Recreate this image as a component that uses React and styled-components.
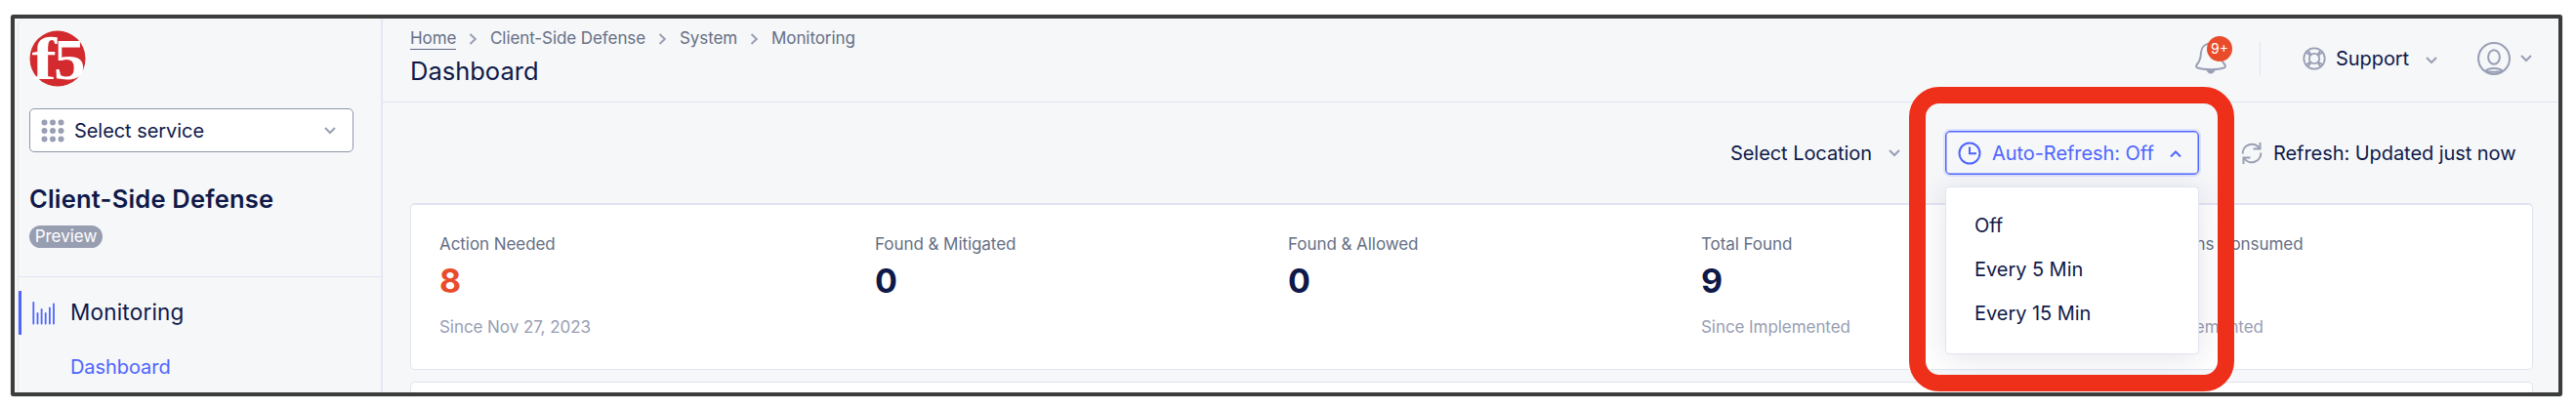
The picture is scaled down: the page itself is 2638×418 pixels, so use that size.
import React from "react";
import styled, { createGlobalStyle } from "styled-components";

const c = {
  ink: "#0f1949",
  muted: "#666f85",
  faint: "#989eb3",
  icon: "#999fb4",
  line: "#e1e4f1",
  bg: "#f5f7f9",
  blue: "#4f65ff",
  alert: "#e94c2a",
};

const GlobalStyle = createGlobalStyle`
  * { box-sizing: border-box; }
  body { margin: 0; background: #fff; font-family: Inter, "Liberation Sans", sans-serif; color: ${c.ink}; }
`;

const Page = styled.div`
  position: relative;
  width: 2638px;
  height: 418px;
  padding: 15px 0 0 11px;
  overflow: hidden;
`;
const Frame = styled.div`
  display: flex;
  width: 2613px;
  height: 391px;
  padding-left: 3px;
  border: 4px solid #3b3c3c;
  border-radius: 3px;
  background: ${c.bg};
  overflow: hidden;
  box-shadow: 0 0 1px #777;
`;
const Sidebar = styled.aside`
  flex: none;
  width: 374px;
  height: 383px;
  border-left: 1px solid #e9e7e7;
  border-right: 2px solid #e6e8f3;
  border-top-left-radius: 8px;
  display: flex;
  flex-direction: column;
`;
const SidebarTop = styled.div`
  flex: none;
  height: 265px;
  padding: 12px 27px 0 11px;
  border-bottom: 1px solid ${c.line};
`;
const Logo = styled.svg`
  display: block;
  width: 58px;
  height: 58px;
  overflow: visible;
`;
const ServiceSelect = styled.div`
  display: flex;
  align-items: center;
  width: 332px;
  height: 45px;
  margin-top: 22px;
  padding: 0 16px 0 11px;
  border: 1px solid #8f96ab;
  border-radius: 5px;
  background: #fff;
`;
const Text = styled.span`
  display: block;
  font-size: ${(p) => p.$size || 20}px;
  line-height: ${(p) => p.$lh || 26}px;
  font-weight: ${(p) => p.$weight || 380};
  letter-spacing: ${(p) => p.$ls || -0.06}px;
  color: ${(p) => p.$color || c.ink};
  white-space: nowrap;
`;
const SelectLabel = styled(Text)`
  flex: 1;
  margin-left: 10px;
`;
const ProductName = styled.h2`
  margin: 32px 0 0;
  font-size: 25.500px;
  line-height: 32px;
  font-weight: 600;
  letter-spacing: 0.2px;
  white-space: nowrap;
`;
const Pill = styled.span`
  display: block;
  width: 75px;
  height: 23px;
  margin-top: 11px;
  border-radius: 12px;
  background: #989eb1;
  color: #fff;
  font-size: 17px;
  line-height: 23px;
  text-align: center;
`;
const NavItem = styled.div`
  display: flex;
  flex: none;
  align-items: center;
  height: 45px;
  margin-top: 14px;
  padding-left: 10px;
  border-left: 3px solid ${c.blue};
  border-radius: 1px;
`;
const NavLabel = styled(Text)`
  margin: -1px 0 0 14px;
`;
const SubItem = styled(Text)`
  margin: 11px 0 0 53px;
`;

const Main = styled.main`
  flex: none;
  width: 2228px;
  display: flex;
  flex-direction: column;
`;
const Header = styled.header`
  display: flex;
  flex: none;
  justify-content: space-between;
  height: 86px;
  padding: 0 26px 0 28px;
  border-bottom: 1px solid ${c.line};
`;
const Crumbs = styled.nav`
  display: flex;
  align-items: center;
  height: 24px;
  margin-top: 9px;
`;
const Crumb = styled(Text)`
  width: ${(p) => p.$w}px;
  letter-spacing: -0.08px;
  border-bottom: 1px solid ${(p) => (p.$link ? "#5f6880" : "transparent")};
`;
const CrumbGap = styled.span`
  display: flex;
  justify-content: center;
  width: 35px;
`;
const PageTitle = styled.h1`
  margin: 4px 0 0;
  font-size: 25.500px;
  line-height: 34px;
  font-weight: 370;
  letter-spacing: 0;
`;
const HeaderTools = styled.div`
  display: flex;
  flex: none;
  align-items: center;
  width: 346px;
  height: 81px;
`;
const Bell = styled.div`
  position: relative;
  flex: none;
  width: 32px;
  height: 34px;
`;
const BellBadge = styled.span`
  position: absolute;
  left: 12px;
  top: -6px;
  width: 26px;
  height: 26px;
  border-radius: 50%;
  background: ${c.alert};
  color: #fff;
  font-size: 14px;
  line-height: 26px;
  text-align: center;
`;
const Separator = styled.span`
  flex: none;
  width: 1px;
  height: 34px;
  margin: 0 43px 0 34px;
  background: ${c.line};
`;
const SupportLabel = styled(Text)`
  flex: none;
  width: 91px;
  margin-left: 10px;
`;
const SupportChevron = styled.span`
  display: flex;
  padding-top: 3px;
`;
const Avatar = styled.span`
  display: flex;
  margin: 0 9px 0 40px;
`;
const Toolbar = styled.div`
  display: flex;
  flex: none;
  justify-content: flex-end;
  height: 45px;
  margin: 29px 26px 0 28px;
`;
const LocationPicker = styled.div`
  display: flex;
  align-items: center;
  width: 220px;
`;
const LocationLabel = styled(Text)`
  width: 161px;
`;
const RefreshPicker = styled.div`
  position: relative;
  display: flex;
  align-items: center;
  width: 260px;
  padding: 0 16px 0 12px;
  border: 1px solid ${c.blue};
  border-radius: 5px;
  box-shadow: inset 0 0 0 0.5px ${c.blue}, 0 0 0 2px #dfe3fb;
`;
const RefreshLabel = styled(Text)`
  flex: 1;
  margin-left: 11px;
`;
const Menu = styled.ul`
  position: absolute;
  z-index: 2;
  left: -1px;
  top: 56px;
  width: 260px;
  height: 172px;
  margin: 0;
  padding: 17px 0 0 29px;
  list-style: none;
  border: 1px solid ${c.line};
  border-radius: 4px;
  background: #fff;
  box-shadow: 0 4px 32px rgba(30, 35, 80, 0.12);
`;
const MenuItem = styled.li`
  font-size: 20px;
  line-height: 45px;
  font-weight: 380;
  letter-spacing: -0.05px;
  white-space: nowrap;
`;
const RefreshButton = styled.div`
  display: flex;
  align-items: center;
  width: 342px;
  padding-left: 43px;
`;
const RefreshText = styled(Text)`
  margin-left: 11px;
`;
const StatsCard = styled.section`
  display: grid;
  grid-template-columns: 446px 423px 423px 423px 1fr;
  flex: none;
  height: 171px;
  margin: 29px 26px 0 28px;
  padding: 27px 0 0 29px;
  border: 1px solid ${c.line};
  border-top-width: 2px;
  border-radius: 5px;
  background: #fff;
`;
const NextCard = styled.section`
  flex: none;
  height: 60px;
  margin: 12px 26px 0 28px;
  border: 1px solid ${c.line};
  border-radius: 5px;
  background: #fff;
`;
const Stat = styled.div`
  display: flex;
  flex-direction: column;
`;
const StatValue = styled(Text)`
  margin: 6px 0 15px;
`;
const Highlight = styled.div`
  position: absolute;
  z-index: 3;
  left: 1955px;
  top: 89px;
  width: 333px;
  height: 312px;
  border: 17px solid #ee301b;
  border-radius: 31px;
`;

const Chevron = ({ up, color = c.icon }) => (
  <svg width="14" height="9" viewBox="0 0 14 9" fill="none" stroke={color} strokeWidth="2">
    <path d={up ? "M2 8.500 7 3.500l5 5" : "M2 2l5 5 5-5"} />
  </svg>
);
const CrumbChevron = () => (
  <svg width="9" height="12" viewBox="0 0 9 12" fill="none" stroke={c.icon} strokeWidth="2">
    <path d="M1.500 1 6.800 6l-5.300 5" />
  </svg>
);
const GridIcon = () => (
  <svg width="24" height="24" viewBox="0 0 24 24" fill={c.icon}>
    {[3.5, 12, 20.5].map((y) => [3.5, 12, 20.5].map((x) => <circle key={x + "-" + y} cx={x} cy={y} r="3" />))}
  </svg>
);
const BarsIcon = () => (
  <svg width="26" height="24" viewBox="0 0 26 24" stroke={c.blue} strokeWidth="1.800" strokeLinecap="round">
    <path d="M2.300 1v21.500M6.500 12v10.500M10.600 8v14.500M14.700 12v10.500M18.900 6.500v16M23 2.500v20" />
  </svg>
);
const BellIcon = () => (
  <svg width="32" height="34" viewBox="0 0 32 34" fill="none" stroke={c.icon} strokeWidth="2">
    <path d="M16 1.500c-5.500 0-9.500 3.500-10 9-.3 6-.8 9-3.800 12-1.500 1.800-1.600 3.200.3 4 7 2.300 20 2.300 27 0 1.900-.8 1.800-2.200.3-4-3-3-3.500-6-3.800-12-.5-5.500-4.500-9-10-9Z" />
    <path d="M11.500 28.500h9q-1.500 4-4.500 4t-4.500-4Z" fill={c.icon} stroke="none" />
  </svg>
);
const SupportIcon = () => (
  <svg width="24" height="24" viewBox="0 0 24 24" fill="none" stroke={c.icon} strokeWidth="1.800">
    <circle cx="12" cy="12" r="10.700" />
    <circle cx="12" cy="12" r="5.200" />
    <path d="M3.500 5.500l4.200 3M5.500 3.500l3 4.200M20.500 5.500l-4.200 3M18.500 3.500l-3 4.200M3.500 18.500l4.200-3M5.500 20.500l3-4.200M20.500 18.500l-4.200-3M18.500 20.500l-3-4.200" />
  </svg>
);
const UserIcon = () => (
  <svg width="34" height="34" viewBox="0 0 34 34" fill="none" stroke={c.icon} strokeWidth="2">
    <circle cx="17" cy="17" r="16" />
    <ellipse cx="17" cy="15.500" rx="5.900" ry="7.300" />
    <path d="M8 30.200c1.500-2.300 4.500-3.200 9-3.200s7.500.9 9 3.200M8.500 29.700q8.500 2.300 17 0" />
  </svg>
);
const ClockIcon = () => (
  <svg width="24" height="24" viewBox="0 0 24 24" fill="none" stroke={c.blue} strokeWidth="2">
    <circle cx="12" cy="12" r="10.500" />
    <path d="M12 5.500V12.300h7" />
  </svg>
);
const RefreshIcon = () => (
  <svg width="22" height="24" viewBox="0 0 22 24" fill="none" stroke={c.icon} strokeWidth="2">
    <path d="M1.700 12.500A9.300 9.300 0 0 1 18.800 7M20.300 11.500A9.300 9.300 0 0 1 3.200 17" />
    <path d="M19.500 1v6.500h-7M2.500 23v-6.500h7" />
  </svg>
);

const stats = [
  { label: "Action Needed", value: "8", note: "Since Nov 27, 2023", color: c.alert },
  { label: "Found & Mitigated", value: "0" },
  { label: "Found & Allowed", value: "0" },
  { label: "Total Found", value: "9", note: "Since Implemented" },
  { label: "Transactions Consumed", value: "", note: "Since Implemented" },
];

export default function App() {
  return (
    <Page>
      <GlobalStyle />
      <Frame>
        <Sidebar>
          <SidebarTop>
            <Logo viewBox="0 0 58 58">
              <circle cx="29" cy="29" r="28.500" fill="#d22a2e" />
              <g fill="#fff" fontFamily="'Liberation Serif', serif" fontWeight="700">
                <text transform="translate(2.500 49.500) scale(1.250 1)" fontSize="61">f</text>
                <text transform="translate(25 49.500) scale(1.100 1)" fontSize="59">5</text>
              </g>
            </Logo>
            <ServiceSelect>
              <GridIcon />
              <SelectLabel>Select service</SelectLabel>
              <Chevron />
            </ServiceSelect>
            <ProductName>Client-Side Defense</ProductName>
            <Pill>Preview</Pill>
          </SidebarTop>
          <NavItem>
            <BarsIcon />
            <NavLabel $size={22.5} $weight={400} $ls={0.2}>Monitoring</NavLabel>
          </NavItem>
          <SubItem $lh={44} $color={c.blue}>Dashboard</SubItem>
        </Sidebar>
        <Main>
          <Header>
            <div>
              <Crumbs>
                <Crumb $size={17} $lh={21} $w={47} $color={c.muted} $link>Home</Crumb>
                <CrumbGap><CrumbChevron /></CrumbGap>
                <Crumb $size={17} $lh={21} $w={159} $color={c.muted}>Client-Side Defense</Crumb>
                <CrumbGap><CrumbChevron /></CrumbGap>
                <Crumb $size={17} $lh={21} $w={59} $color={c.muted}>System</Crumb>
                <CrumbGap><CrumbChevron /></CrumbGap>
                <Crumb $size={17} $lh={21} $w={90} $color={c.muted}>Monitoring</Crumb>
              </Crumbs>
              <PageTitle>Dashboard</PageTitle>
            </div>
            <HeaderTools>
              <Bell>
                <BellIcon />
                <BellBadge>9+</BellBadge>
              </Bell>
              <Separator />
              <SupportIcon />
              <SupportLabel>Support</SupportLabel>
              <SupportChevron><Chevron /></SupportChevron>
              <Avatar><UserIcon /></Avatar>
              <Chevron />
            </HeaderTools>
          </Header>
          <Toolbar>
            <LocationPicker>
              <LocationLabel>Select Location</LocationLabel>
              <Chevron />
            </LocationPicker>
            <RefreshPicker>
              <ClockIcon />
              <RefreshLabel $color={c.blue}>Auto-Refresh: Off</RefreshLabel>
              <Chevron up color={c.blue} />
              <Menu>
                <MenuItem>Off</MenuItem>
                <MenuItem>Every 5 Min</MenuItem>
                <MenuItem>Every 15 Min</MenuItem>
              </Menu>
            </RefreshPicker>
            <RefreshButton>
              <RefreshIcon />
              <RefreshText>Refresh: Updated just now</RefreshText>
            </RefreshButton>
          </Toolbar>
          <StatsCard>
            {stats.map((s) => (
              <Stat key={s.label}>
                <Text $size={17} $color={c.muted}>{s.label}</Text>
                <StatValue $size={34} $lh={38} $weight={700} $color={s.color}>{s.value || "\u00a0"}</StatValue>
                {s.note && <Text $size={17} $color={c.faint}>{s.note}</Text>}
              </Stat>
            ))}
          </StatsCard>
          <NextCard />
        </Main>
      </Frame>
      <Highlight />
    </Page>
  );
}
